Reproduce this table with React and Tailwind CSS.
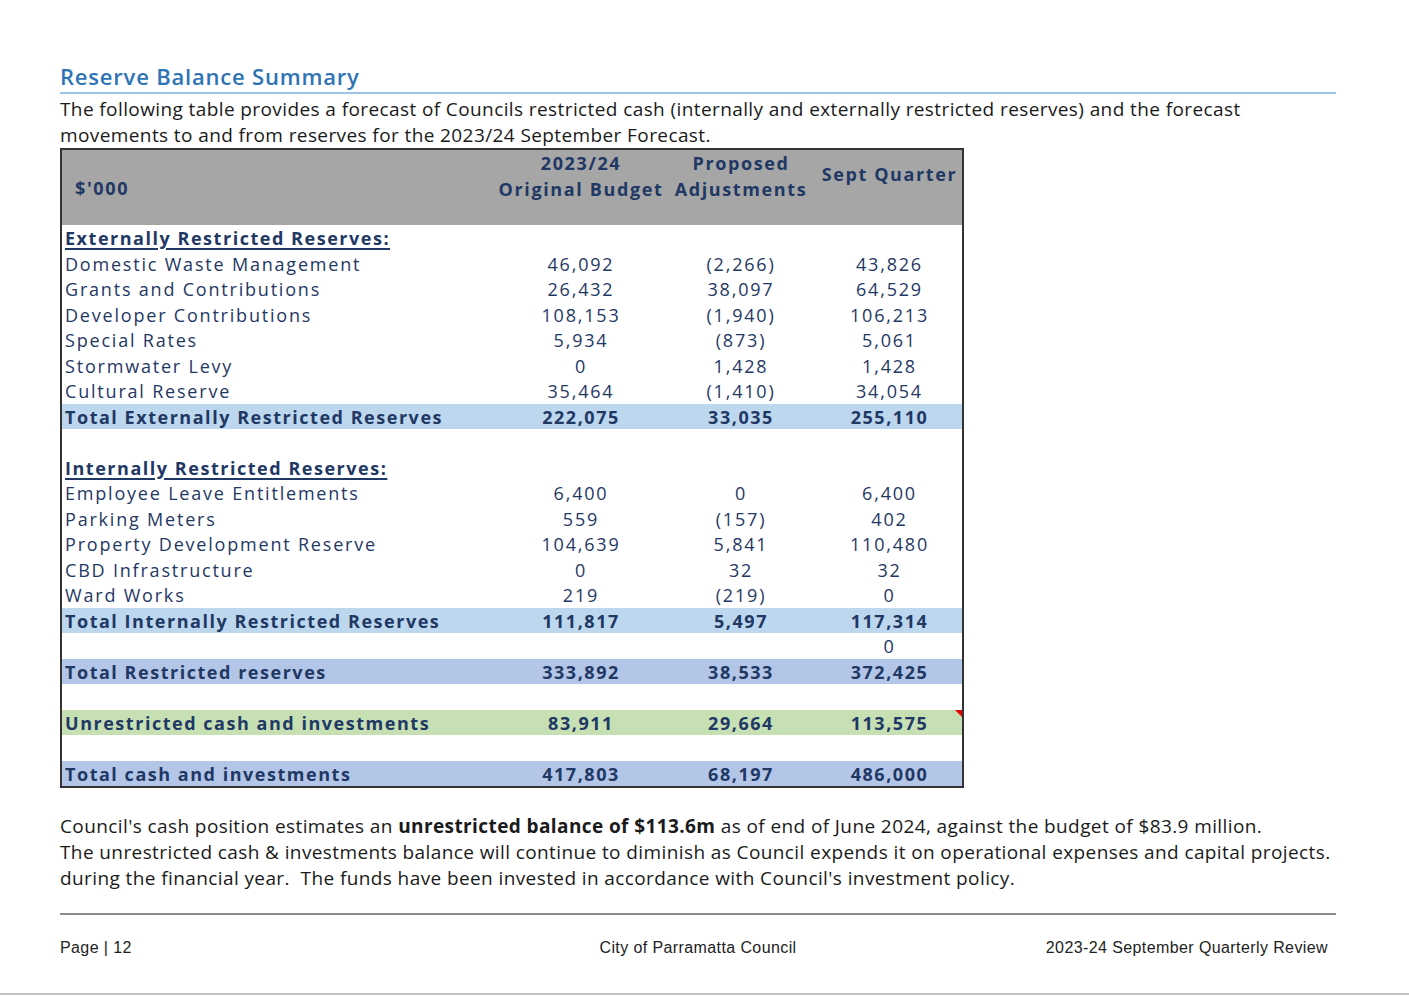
import React from "react";

const sections = [
  { type: "head", label: "Externally Restricted Reserves:" },
  { label: "Domestic Waste Management", v: ["46,092", "(2,266)", "43,826"] },
  { label: "Grants and Contributions", v: ["26,432", "38,097", "64,529"] },
  { label: "Developer Contributions", v: ["108,153", "(1,940)", "106,213"] },
  { label: "Special Rates", v: ["5,934", "(873)", "5,061"] },
  { label: "Stormwater Levy", v: ["0", "1,428", "1,428"] },
  { label: "Cultural Reserve", v: ["35,464", "(1,410)", "34,054"] },
  { type: "total", bg: "bg-[#bdd7ee]", label: "Total Externally Restricted Reserves", v: ["222,075", "33,035", "255,110"] },
  { type: "blank" },
  { type: "head", label: "Internally Restricted Reserves:" },
  { label: "Employee Leave Entitlements", v: ["6,400", "0", "6,400"] },
  { label: "Parking Meters", v: ["559", "(157)", "402"] },
  { label: "Property Development Reserve", v: ["104,639", "5,841", "110,480"] },
  { label: "CBD Infrastructure", v: ["0", "32", "32"] },
  { label: "Ward Works", v: ["219", "(219)", "0"] },
  { type: "total", bg: "bg-[#bdd7ee]", label: "Total Internally Restricted Reserves", v: ["111,817", "5,497", "117,314"] },
  { label: "", v: ["", "", "0"] },
  { type: "total", bg: "bg-[#b4c6e7]", label: "Total Restricted reserves", v: ["333,892", "38,533", "372,425"] },
  { type: "blank" },
  { type: "total", bg: "bg-[#c6e0b4]", label: "Unrestricted cash and investments", v: ["83,911", "29,664", "113,575"], flag: true },
  { type: "blank" },
  { type: "total", bg: "bg-[#b4c6e7]", label: "Total cash and investments", v: ["417,803", "68,197", "486,000"] },
];

const cols = "grid grid-cols-[435px_168px_152px_145px]";

function Row({ row }) {
  if (row.type === "blank") return <div className="h-[25.5px]" />;
  if (row.type === "head")
    return (
      <div className={`${cols} h-[25.5px] items-center`}>
        <div className="pl-[3px] font-bold tracking-[0.085em] underline underline-offset-[3px] decoration-[1.5px]">{row.label}</div>
      </div>
    );
  const bold = row.type === "total";
  return (
    <div
      className={`${cols} relative h-[25.5px] items-center ${
        bold ? row.bg + " font-bold tracking-[0.085em]" : "tracking-[0.1em]"
      }`}
    >
      <div className="pl-[3px] whitespace-nowrap">{row.label}</div>
      {row.v.map((n, i) => (
        <div key={i} className="text-center">{n}</div>
      ))}
      {row.flag && (
        <div className="absolute right-0 top-0 h-0 w-0 border-l-[7px] border-t-[7px] border-l-transparent border-t-[#e00000]" />
      )}
    </div>
  );
}

export default function App() {
  return (
    <div className="relative h-[996px] w-[1409px] bg-white font-['Open_Sans',sans-serif] text-[#1a1a1a]">
      <div className="ml-[60px] w-[1276px] pt-[62px]">
        <h2 className="border-b-2 border-[#9dc3e6] pb-[2px] text-[22px] font-semibold leading-[28px] tracking-[0.8px] text-[#2e74b5]">
          Reserve Balance Summary
        </h2>
        <div className="mt-[2px] whitespace-nowrap text-[19px] leading-[26px] tracking-[0.4px]">
          <p>The following table provides a forecast of Councils restricted cash (internally and externally restricted reserves) and the forecast</p>
          <p>movements to and from reserves for the 2023/24 September Forecast.</p>
        </div>

        <div className="w-[904px] border-2 border-[#333] text-[18px] text-[#1f3864]">
          <div className={`${cols} h-[75px] bg-[#a6a6a6] font-bold leading-[26px] tracking-[0.09em]`}>
            <div className="flex items-start pl-[13px] pt-[25px]">$'000</div>
            <div className="text-center">2023/24<br />Original Budget</div>
            <div className="text-center">Proposed<br />Adjustments</div>
            <div className="pt-[11px] text-center">Sept Quarter</div>
          </div>
          {sections.map((r, i) => (
            <Row key={i} row={r} />
          ))}
        </div>

        <div className="mt-[25px] whitespace-nowrap text-[19px] leading-[26px] tracking-[0.4px]">
          <p>
            Council's cash position estimates an <b>unrestricted balance of $113.6m</b> as of end of June 2024, against the budget of $83.9 million.
          </p>
          <p>The unrestricted cash &amp; investments balance will continue to diminish as Council expends it on operational expenses and capital projects.</p>
          <p>during the financial year.&nbsp; The funds have been invested in accordance with Council's investment policy.</p>
        </div>

        <div className="mt-[22px] border-t-2 border-[#8c8c8c]" />
        <div className="mt-[21px] grid grid-cols-3 font-['Liberation_Sans',sans-serif] text-[16px] tracking-[0.4px] text-[#222]">
          <span>Page | 12</span>
          <span className="text-center">City of Parramatta Council</span>
          <span className="pr-[8px] text-right">2023-24 September Quarterly Review</span>
        </div>
      </div>
      <div className="absolute bottom-[1px] left-0 h-[2px] w-full bg-[#c4c4c4]" />
    </div>
  );
}
